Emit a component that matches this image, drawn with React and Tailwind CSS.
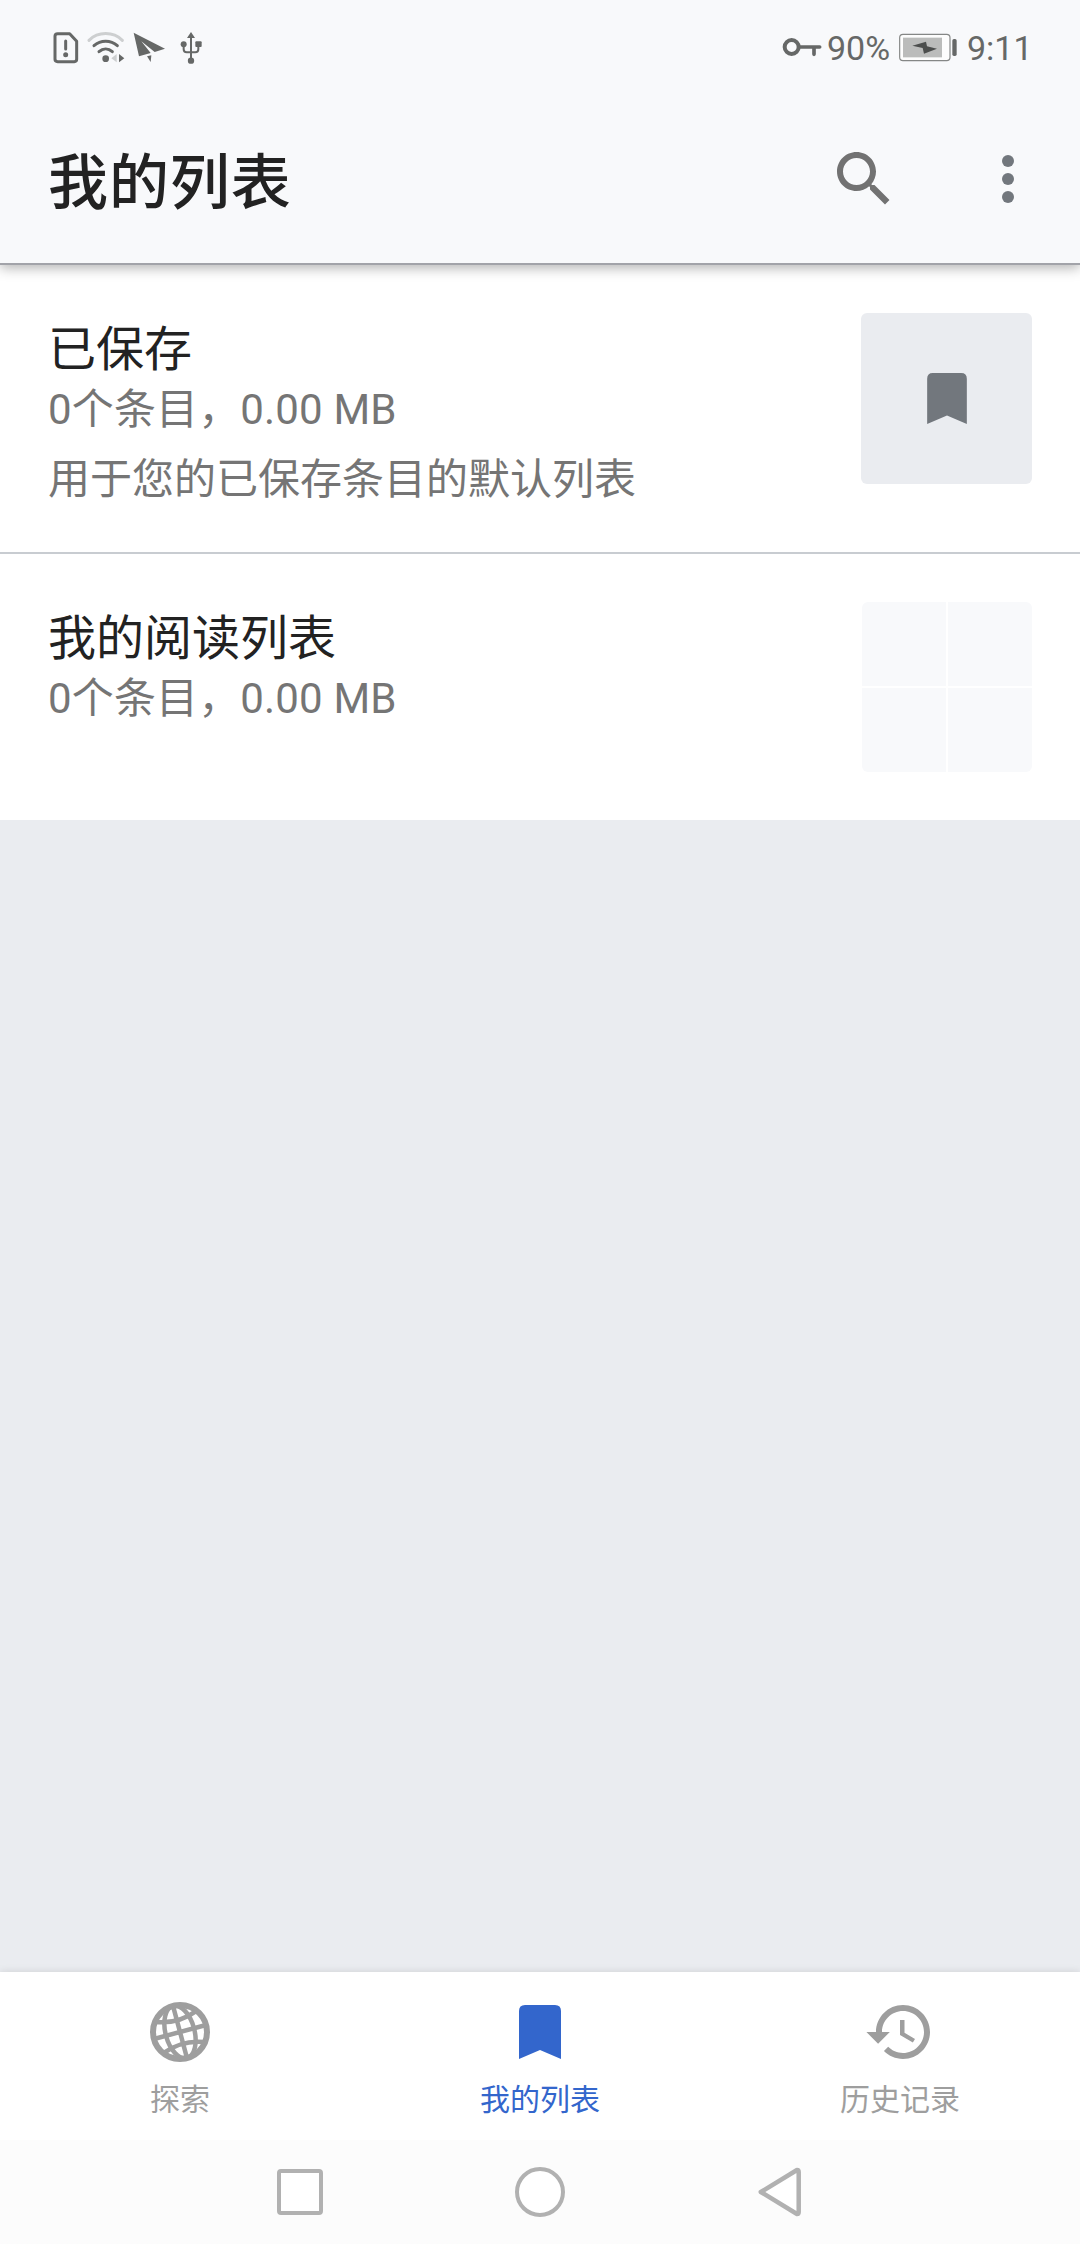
const lists = [
  {
    id: 1,
    title: '已保存',
    info: '0个条目，0.00 MB',
    description: '用于您的已保存条目的默认列表',
    isDefault: true,
  },
  {
    id: 2,
    title: '我的阅读列表',
    info: '0个条目，0.00 MB',
  },
]

const tabs = [
  { label: '探索', icon: GlobeIcon },
  { label: '我的列表', icon: TabBookmarkIcon, active: true },
  { label: '历史记录', icon: HistoryIcon },
]

function SimAlertIcon() {
  return (
    <svg viewBox="39 33 78 99" className="h-[33px] w-[26px]" fill="none">
      <path
        d="M53 41H89L110 64V118Q110 125 103 125H53Q45 125 45 118V48Q45 41 53 41Z"
        stroke="#666867"
        strokeWidth="9"
        strokeLinejoin="round"
      />
      <path d="M77 63V87" stroke="#666867" strokeWidth="9" strokeLinecap="round" />
      <circle cx="77" cy="104" r="7.5" fill="#666867" />
    </svg>
  )
}

function WifiIcon() {
  return (
    <svg viewBox="141 33 114 99" className="h-[33px] w-[38px]" fill="none">
      <g strokeWidth="9" strokeLinecap="round">
        <path d="M147 61C174 34 220 34 247 61" stroke="#cdcfd0" />
        <path d="M162 77C182 59 212 59 232 77" stroke="#666867" />
        <path d="M177 95C189 84 205 84 217 95" stroke="#666867" />
      </g>
      <circle cx="197" cy="116" r="10" fill="#666867" />
      <path d="M230 102V127L214 115Z" fill="#cdcfd0" />
      <path d="M237 102V127L253 115Z" fill="#666867" />
    </svg>
  )
}

function PlaneIcon() {
  return (
    <svg viewBox="279 33 99 99" className="h-[33px] w-[33px]" fill="#666867">
      <path d="M281 38L375 86L344 96L304 64L332 99L297 109Z" />
      <path d="M321 109L334 106L332 126Z" />
    </svg>
  )
}

function UsbIcon() {
  return (
    <svg viewBox="420 33 66 99" className="h-[33px] w-[22px]" fill="#666867">
      <path d="M453 36L465 54H441Z" />
      <path
        d="M453 48V120M431 74V88Q431 97 440 97H466Q475 97 475 88V74"
        fill="none"
        stroke="#666867"
        strokeWidth="6"
      />
      <circle cx="431" cy="73" r="9" />
      <rect x="466" y="64" width="19" height="17" rx="3" />
      <circle cx="453" cy="122" r="9.5" />
    </svg>
  )
}

function KeyIcon() {
  return (
    <svg viewBox="36 33 120 99" className="h-[33px] w-[40px]" fill="none" stroke="#666867">
      <circle cx="65" cy="81" r="21" strokeWidth="12" />
      <path d="M88 81H149M132 83V103" strokeWidth="11" strokeLinecap="round" />
    </svg>
  )
}

function BatteryIcon() {
  return (
    <svg viewBox="387 33 177 99" className="h-[33px] w-[59px]">
      <rect x="389" y="43" width="151" height="79" rx="10" fill="#fdfdfd" stroke="#858786" strokeWidth="3.5" />
      <rect x="399" y="53" width="117" height="59" fill="#bbbcbb" />
      <path d="M427 77L468 65L471 79L501 86L462 101L458 84Z" fill="#4c4e4d" />
      <rect x="547" y="57" width="13" height="51" rx="5" fill="#666867" />
    </svg>
  )
}

function SearchIcon() {
  return (
    <svg viewBox="0 0 24 24" className="size-[72px]" fill="#727272">
      <path d="M15.5 14h-.79l-.28-.27C15.41 12.59 16 11.11 16 9.5 16 5.91 13.09 3 9.5 3S3 5.91 3 9.5 5.91 16 9.5 16c1.61 0 3.09-.59 4.23-1.57l.27.28v.79l5 4.99L20.49 19l-4.99-5zm-6 0C7.01 14 5 11.99 5 9.5S7.01 5 9.5 5 14 7.01 14 9.5 11.99 14 9.5 14z" />
    </svg>
  )
}

function MoreIcon() {
  return (
    <svg viewBox="0 0 24 24" className="size-[72px]" fill="#72777d">
      <circle cx="12" cy="6" r="2" />
      <circle cx="12" cy="12" r="2" />
      <circle cx="12" cy="18" r="2" />
    </svg>
  )
}

function BookmarkIcon({ className }) {
  return (
    <svg viewBox="0 0 42 54" className={className} fill="currentColor">
      <path d="M6 0H36Q42 0 42 6V54L21 45L0 54V6Q0 0 6 0Z" />
    </svg>
  )
}

function TabBookmarkIcon() {
  return (
    <span className="flex size-[72px] items-center justify-center">
      <BookmarkIcon className="h-[54px] w-[42px]" />
    </span>
  )
}

function GlobeIcon() {
  return (
    <svg viewBox="-36 -36 72 72" className="size-[72px]" fill="none" stroke="currentColor">
      <circle r="27" strokeWidth="6" />
      <g transform="rotate(-15)" strokeWidth="4.5">
        <path d="M-27 0H27M0 -27V27" />
        <ellipse rx="14.5" ry="27" />
        <path d="M-21 -16Q0 -8 21 -16M-21 16Q0 8 21 16" />
      </g>
    </svg>
  )
}

function HistoryIcon() {
  return (
    <svg viewBox="0 0 24 24" className="size-[72px]" fill="currentColor">
      <path d="M13 3c-4.97 0-9 4.03-9 9H.8l3.9 3.9L8.6 12H6c0-3.87 3.13-7 7-7s7 3.13 7 7-3.13 7-7 7c-1.93 0-3.68-.79-4.94-2.06l-1.42 1.42C8.27 19.99 10.51 21 13 21c4.97 0 9-4.03 9-9s-4.03-9-9-9zm-1 5v5l4.28 2.54.72-1.21-3.5-2.08V8H12z" />
    </svg>
  )
}

function StatusBar() {
  return (
    <div className="flex h-[95px] items-center justify-between pr-12 pl-[53px] text-[34px] leading-[40px] text-[#666867]">
      <div className="flex items-center">
        <SimAlertIcon />
        <div className="ml-2">
          <WifiIcon />
        </div>
        <div className="ml-2">
          <PlaneIcon />
        </div>
        <div className="ml-[14px]">
          <UsbIcon />
        </div>
      </div>
      <div className="flex items-center">
        <KeyIcon />
        <span className="ml-[5px] w-[72px]">90%</span>
        <BatteryIcon />
        <span className="ml-[9px] w-[65px]">9:11</span>
      </div>
    </div>
  )
}

function ListItem({ list }) {
  return (
    <li
      className={`flex items-start justify-between bg-white px-12 pt-12 ${
        list.isDefault ? 'h-[289px] border-b-2 border-[#c8ccd1]' : 'h-[266px]'
      }`}
    >
      <div className="pt-[2px]">
        <h2 className="text-[48px] leading-[70px] text-[#222222]">{list.title}</h2>
        <p className="text-[42px] leading-[50px] tracking-[0.15px] text-[#757575]">{list.info}</p>
        {list.description && (
          <p className="mt-[10px] text-[42px] leading-[70px] text-[#757575]">{list.description}</p>
        )}
      </div>
      {list.isDefault ? (
        <div className="flex size-[171px] items-center justify-center rounded-[6px] bg-[#eaecf0] text-[#72777d]">
          <BookmarkIcon className="h-[51px] w-[40px]" />
        </div>
      ) : (
        <div className="grid size-[170px] grid-cols-2 gap-[2px] overflow-hidden rounded-[6px]">
          <div className="bg-[#f8f9fb]" />
          <div className="bg-[#f8f9fb]" />
          <div className="bg-[#f8f9fb]" />
          <div className="bg-[#f8f9fb]" />
        </div>
      )}
    </li>
  )
}

export default function App() {
  return (
    <div className="flex h-[2244px] w-[1080px] flex-col overflow-hidden bg-[#eaecf0] font-[Roboto,'Noto_Sans_CJK_SC',sans-serif]">
      <header className="relative h-[265px] shrink-0 border-b-2 border-[#a2a3a9] bg-[#f8f9fb] shadow-[0_3px_12px_rgba(0,0,0,0.3)]">
        <StatusBar />
        <div className="flex h-[168px] items-center justify-between pr-9 pl-12">
          <h1 className="pt-[9px] text-[60px] leading-[80px] font-medium tracking-[0.9px] text-[#222222]">
            我的列表
          </h1>
          <div className="flex gap-[72px]">
            <SearchIcon />
            <MoreIcon />
          </div>
        </div>
      </header>

      <main className="flex-1">
        <ul>
          {lists.map((list) => (
            <ListItem key={list.id} list={list} />
          ))}
        </ul>
      </main>

      <nav className="grid h-[168px] shrink-0 grid-cols-3 bg-white shadow-[0_0_8px_rgba(0,0,0,0.12)]">
        {tabs.map(({ label, icon: Icon, active }) => (
          <button
            key={label}
            className={`flex flex-col items-center pt-6 ${active ? 'text-[#3366cc]' : 'text-[#9e9e9e]'}`}
          >
            <Icon />
            <span className="mt-[10px] text-[30px] leading-[44px]">{label}</span>
          </button>
        ))}
      </nav>

      <div className="relative grid h-[104px] shrink-0 grid-cols-3 items-center justify-items-center bg-[#fcfcfc] px-[180px]">
        <div className="size-[46px] rounded-[4px] border-4 border-[#b1b1b1] bg-white" />
        <div className="size-[50px] rounded-full border-4 border-[#b1b1b1] bg-white" />
        <svg viewBox="0 0 44 50" className="h-[50px] w-[44px]">
          <path
            d="M39 3L2.8 25L39 47Q40.7 47 40.7 45V5Q40.7 3 39 3Z"
            fill="white"
            stroke="#b1b1b1"
            strokeWidth="4.5"
            strokeLinejoin="round"
          />
        </svg>
      </div>
    </div>
  )
}
